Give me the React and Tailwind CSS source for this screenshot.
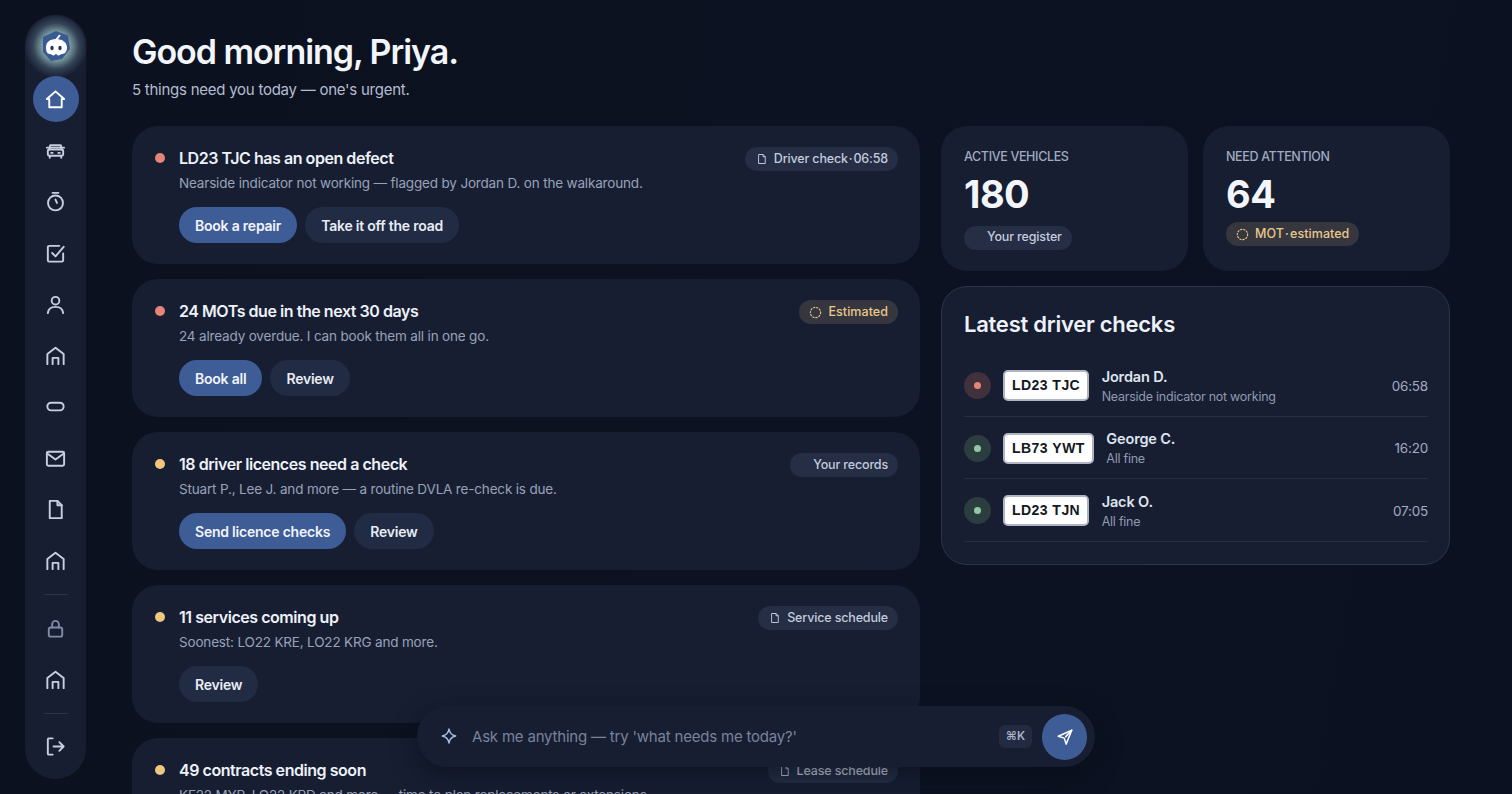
const font = { fontFamily: 'Inter, sans-serif' }

function Ico({ children, size = 23, sw = 2 }) {
  return (
    <svg width={size} height={size} viewBox="0 0 24 24" fill="none" stroke="currentColor" strokeWidth={sw} strokeLinecap="round" strokeLinejoin="round">
      {children}
    </svg>
  )
}

const HomeIcon = () => <Ico><path d="M12 3.500 21 11.500h-2.500V20h-13v-8.500H3z" /></Ico>
const CarIcon = () => <Ico><path d="M5.500 11 6.500 6.500h11l1 4.500" /><path d="M3 9h18" /><rect x="4" y="11" width="16" height="6.500" rx="1.500" /><path d="M6 17.500v2M18 17.500v2M7.500 14.500h1.500M15 14.500h1.500" /></Ico>
const TimerIcon = () => <Ico><path d="M9 3h6" /><circle cx="12" cy="13.500" r="7.800" /><path d="M12 10l1.500 3.500" /></Ico>
const CheckIcon = () => <Ico><path d="M20 12v7a1.500 1.500 0 0 1-1.500 1.500h-13A1.500 1.500 0 0 1 4 19V5.500A1.500 1.500 0 0 1 5.500 4H16" /><path d="M8.500 11.500l3.500 3.500 8.500-10" /></Ico>
const UserIcon = () => <Ico><circle cx="12" cy="8" r="4" /><path d="M4 21c.5-4.500 4-6.500 8-6.500s7.500 2 8 6.500" /></Ico>
const DepotIcon = () => <Ico><path d="M3.500 21V10.500L12 4l8.500 6.500V21" /><path d="M9 21v-6.500h6V21" /></Ico>
const PillIcon = () => <Ico><rect x="3.500" y="8" width="17" height="8" rx="4" /></Ico>
const MailIcon = () => <Ico><rect x="3" y="5" width="18" height="14.500" rx="1.500" /><path d="M3 6.500 12 13l9-6.500" /></Ico>
const FileIcon = ({ size = 23, sw = 2 }) => <Ico size={size} sw={sw}><path d="M6 3h8l4.500 4.500V21H6z" /><path d="M14 3v4.500h4.500" /></Ico>
const LockIcon = () => <Ico><rect x="5" y="11" width="14" height="9.500" rx="2" /><path d="M8.500 11V7.500a3.500 3.500 0 0 1 7 0V11" /></Ico>
const ExitIcon = () => <Ico><path d="M9 3.500H5a1 1 0 0 0-1 1v15a1 1 0 0 0 1 1h4" /><path d="M10 12h10.500M16 7.500l4.500 4.500-4.500 4.500" /></Ico>

function Ring() {
  return (
    <svg width="13" height="13" viewBox="0 0 24 24" fill="none" stroke="currentColor" strokeWidth="2" strokeDasharray="2.500 3.200" strokeLinecap="round">
      <circle cx="12" cy="12" r="9.500" />
    </svg>
  )
}

function Logo() {
  return (
    <div className="relative h-[44px] flex items-center justify-center">
      <div className="absolute left-1/2 top-1/2 w-[64px] h-[64px] -translate-x-1/2 -translate-y-1/2 rounded-full bg-[radial-gradient(circle_closest-side,rgba(150,190,190,0.75)_45%,rgba(105,135,155,0.35)_72%,rgba(40,55,80,0)_100%)]" />
      <svg className="relative" width="28" height="30" viewBox="0 0 28 30">
        <path d="M14 0 26 4.500 28 18 20 28 9 30 1 21 1 6z" fill="#3a5a94" />
        <path d="M14 8c6.500 0 11 3.500 11 8.500 0 4.500-2.500 6.500-5 6.500-1.500 0-2 1.500-3.500 1.500S15 23 14 23s-1 1.500-2.500 1.500S9.500 23 8 23c-2.500 0-4-2-4-6.500C4 11.500 7.500 8 14 8z" fill="#ffffff" />
        <path d="M14 9l4-5" stroke="#ffffff" strokeWidth="2" />
        <ellipse cx="10" cy="17" rx="1.700" ry="2.300" fill="#24365c" />
        <ellipse cx="18" cy="17" rx="1.700" ry="2.300" fill="#24365c" />
      </svg>
    </div>
  )
}

function NavItem({ icon, active, dim }) {
  return (
    <div className={`w-[46px] h-[46px] rounded-full flex items-center justify-center flex-shrink-0 ${active ? 'bg-[#3e5c96] text-white' : dim ? 'text-[#7f8ba6]' : 'text-[#c6cee0]'}`}>
      {icon}
    </div>
  )
}

function Sidebar() {
  return (
    <aside className="w-[61px] h-[764px] mt-[15px] ml-[25px] flex-shrink-0 rounded-full bg-[#171e32] flex flex-col items-center gap-[5.250px] pt-[9px]">
      <div className="mb-[3px]"><Logo /></div>
      <NavItem active icon={<HomeIcon />} />
      <NavItem icon={<CarIcon />} />
      <NavItem icon={<TimerIcon />} />
      <NavItem icon={<CheckIcon />} />
      <NavItem icon={<UserIcon />} />
      <NavItem icon={<DepotIcon />} />
      <NavItem icon={<PillIcon />} />
      <NavItem icon={<MailIcon />} />
      <NavItem icon={<FileIcon />} />
      <NavItem icon={<DepotIcon />} />
      <div className="w-[24px] h-px bg-[#2a3348] my-[5px]" />
      <NavItem dim icon={<LockIcon />} />
      <NavItem icon={<DepotIcon />} />
      <div className="w-[24px] h-px bg-[#2a3348] my-[5px]" />
      <NavItem icon={<ExitIcon />} />
    </aside>
  )
}

function Chip({ kind, children }) {
  const amber = kind === 'ring'
  return (
    <span className={`inline-flex items-center gap-[6px] h-[24px] rounded-full text-[12.500px] font-medium whitespace-nowrap ${amber ? 'bg-[#36363f] text-[#e9c88c] pl-[10px] pr-[10px] tracking-[0.05px]' : kind === 'blank' ? 'bg-[#252e45] text-[#c3cbdc] pl-[10px] pr-[10px] tracking-[-0.15px]' : 'bg-[#252e45] text-[#c3cbdc] pl-[11px] pr-[10px] tracking-[-0.15px]'}`}>
      {kind === 'file' && <FileIcon size={12} sw={1.900} />}
      {kind === 'ring' && <Ring />}
      {kind === 'blank' && <span className="w-[7px] h-[7px] flex-shrink-0" />}
      {children}
    </span>
  )
}

const tasks = [
  { dot: 'bg-[#e58578]', title: 'LD23 TJC has an open defect', sub: 'Nearside indicator not working — flagged by Jordan D. on the walkaround.', chip: 'Driver check\u200a·\u200a06:58', kind: 'file', actions: ['Book a repair', 'Take it off the road'] },
  { dot: 'bg-[#e58578]', title: '24 MOTs due in the next 30 days', sub: '24 already overdue. I can book them all in one go.', chip: 'Estimated', kind: 'ring', actions: ['Book all', 'Review'] },
  { dot: 'bg-[#edc77f]', title: '18 driver licences need a check', sub: 'Stuart P., Lee J. and more — a routine DVLA re-check is due.', chip: 'Your records', kind: 'blank', actions: ['Send licence checks', 'Review'] },
  { dot: 'bg-[#edc77f]', title: '11 services coming up', sub: 'Soonest: LO22 KRE, LO22 KRG and more.', chip: 'Service schedule', kind: 'file', actions: ['Review'], secondaryOnly: true },
  { dot: 'bg-[#edc77f]', title: '49 contracts ending soon', sub: 'KF22 MYP, LO22 KPD and more — time to plan replacements or extensions.', chip: 'Lease schedule', kind: 'file', actions: ['Review'], secondaryOnly: true },
]

function TaskCard({ task }) {
  return (
    <div className="h-[138px] flex-shrink-0 rounded-[26px] bg-[#171e32] pl-[23px] pr-[22px] pt-[21px] flex gap-[14px]">
      <span className={`w-[10px] h-[10px] rounded-full mt-[6px] flex-shrink-0 ${task.dot}`} />
      <div className="flex-1 min-w-0">
        <div className="flex items-start justify-between">
          <h3 className="text-[16px] leading-[22px] font-semibold text-[#edf1f8] tracking-[-0.45px]">{task.title}</h3>
          <Chip kind={task.kind}>{task.chip}</Chip>
        </div>
        <p className="text-[13.500px] leading-[20px] mt-[2px] text-[#97a2b9] tracking-[-0.17px]">{task.sub}</p>
        <div className="flex gap-[8px] mt-[14px]">
          {task.actions.map((label, idx) => (
            <button key={label} className={`h-[36px] px-[16px] rounded-full text-[14px] font-semibold tracking-[-0.22px] ${idx === 0 && !task.secondaryOnly ? 'bg-[#3e5c96] text-[#f1f4fa]' : 'bg-[#212b43] text-[#e8ecf4]'}`}>
              {label}
            </button>
          ))}
        </div>
      </div>
    </div>
  )
}

function StatCard({ label, value, chip, chipGap }) {
  return (
    <div className="flex-1 h-[145px] rounded-[26px] bg-[#171e32] pl-[23px] pt-[23px]">
      <p className="text-[12.500px] leading-[16px] font-medium text-[#a0abc1] tracking-[-0.35px]">{label}</p>
      <p className="text-[38px] leading-[44px] mt-[7px] font-bold text-[#f2f5fa] tracking-[-0.5px]">{value}</p>
      <div className={chipGap}>{chip}</div>
    </div>
  )
}

const checks = [
  { plate: 'LD23 TJC', name: 'Jordan D.', note: 'Nearside indicator not working', time: '06:58', ring: 'bg-[#41313c]', dot: 'bg-[#e58578]' },
  { plate: 'LB73 YWT', name: 'George C.', note: 'All fine', time: '16:20', ring: 'bg-[#2c3d40]', dot: 'bg-[#8fc9a3]' },
  { plate: 'LD23 TJN', name: 'Jack O.', note: 'All fine', time: '07:05', ring: 'bg-[#2c3d40]', dot: 'bg-[#8fc9a3]' },
]

function CheckRow({ row }) {
  return (
    <div className="h-[62.500px] pt-[2px] flex items-center gap-[12.500px] border-b border-[#262f44]">
      <span className={`w-[26.500px] h-[27px] rounded-full flex items-center justify-center flex-shrink-0 ${row.ring}`}>
        <span className={`w-[7px] h-[7px] rounded-full ${row.dot}`} />
      </span>
      <span className="h-[31px] px-[7px] flex items-center bg-white border-2 border-[#aeb4c2] rounded-[5px] text-[14px] font-bold tracking-[0.45px] [font-kerning:none] text-[#14181f] whitespace-nowrap" style={{ fontFamily: '"Liberation Sans", sans-serif' }}>
        {row.plate}
      </span>
      <div className="flex-1 min-w-0 pt-[1px]">
        <p className="text-[14.500px] leading-[20px] font-semibold text-[#dfe4ee] tracking-[-0.15px]">{row.name}</p>
        <p className="text-[12.500px] leading-[18px] mt-[1px] text-[#8f9ab1] tracking-[-0.25px]">{row.note}</p>
      </div>
      <span className="text-[13.500px] text-[#a0abc1] tracking-[-0.2px]">{row.time}</span>
    </div>
  )
}

function AskBar() {
  return (
    <div className="absolute left-[417px] top-[706px] w-[678px] h-[61px] rounded-full bg-[#171e32] shadow-[0_8px_24px_rgba(8,12,24,0.55)] flex items-center pl-[23px] pr-[8px]">
      <svg width="18" height="18" viewBox="0 0 24 24" fill="none" stroke="#a9bde6" strokeWidth="1.800" strokeLinejoin="round" className="mb-[2px]">
        <path d="M12 2.500c.8 5.500 3.500 8.500 9 9.500-5.500 1-8.200 4-9 9.500-.8-5.500-3.500-8.500-9-9.500 5.500-1 8.200-4 9-9.500z" />
      </svg>
      <span className="ml-[14px] mt-[1px] flex-1 text-[15px] text-[#78839c] tracking-[-0.2px]">Ask me anything — try 'what needs me today?'</span>
      <span className="h-[23px] px-[7px] mr-[10px] flex items-center rounded-md bg-[#222b42] text-[11.500px] font-semibold text-[#aab4c9]">⌘K</span>
      <span className="w-[45px] h-[46px] rounded-full bg-[#3e5c96] flex items-center justify-center text-white">
        <svg width="18" height="18" viewBox="0 0 24 24" fill="none" stroke="currentColor" strokeWidth="2" strokeLinejoin="round" strokeLinecap="round">
          <path d="M21 3 3 11l8 2.500 2.500 8z" />
          <path d="M21 3 13 11.500" />
        </svg>
      </span>
    </div>
  )
}

export default function App() {
  return (
    <div className="relative h-screen overflow-hidden flex bg-[linear-gradient(100deg,#0c111f_0%,#0c1221_60%,#0b1120_100%)]" style={font}>
      <Sidebar />
      <main className="flex-1 min-w-0 pl-[46px] pr-[62px] pt-[31px]">
        <h1 className="text-[34px] leading-[42px] font-semibold text-[#f2f5fb] tracking-[-1.050px]">Good morning, Priya.</h1>
        <p className="text-[15px] leading-[22px] mt-[6px] text-[#b4bdd0] tracking-[-0.25px]">5 things need you today — one's urgent.</p>
        <div className="flex gap-[21px] mt-[25px] items-start">
          <div className="w-[788px] flex-shrink-0 flex flex-col gap-[15px]">
            {tasks.map(task => <TaskCard key={task.title} task={task} />)}
          </div>
          <div className="flex-1 min-w-0">
            <div className="flex gap-[15px]">
              <StatCard label="ACTIVE VEHICLES" value="180" chipGap="mt-[7px]" chip={<Chip kind="blank">Your register</Chip>} />
              <StatCard label="NEED ATTENTION" value="64" chipGap="mt-[6px]" chip={<Chip kind="ring">MOT{'\u200a·\u200a'}estimated</Chip>} />
            </div>
            <div className="mt-[15px] h-[279px] rounded-[26px] bg-[#171e32] border border-[#2b3449] pl-[22px] pr-[21px] pt-[22px]">
              <h2 className="text-[22px] leading-[30px] font-semibold text-[#edf1f8] tracking-[-0.25px] mb-[15px]">Latest driver checks</h2>
              {checks.map(row => <CheckRow key={row.plate} row={row} />)}
            </div>
          </div>
        </div>
      </main>
      <AskBar />
    </div>
  )
}
